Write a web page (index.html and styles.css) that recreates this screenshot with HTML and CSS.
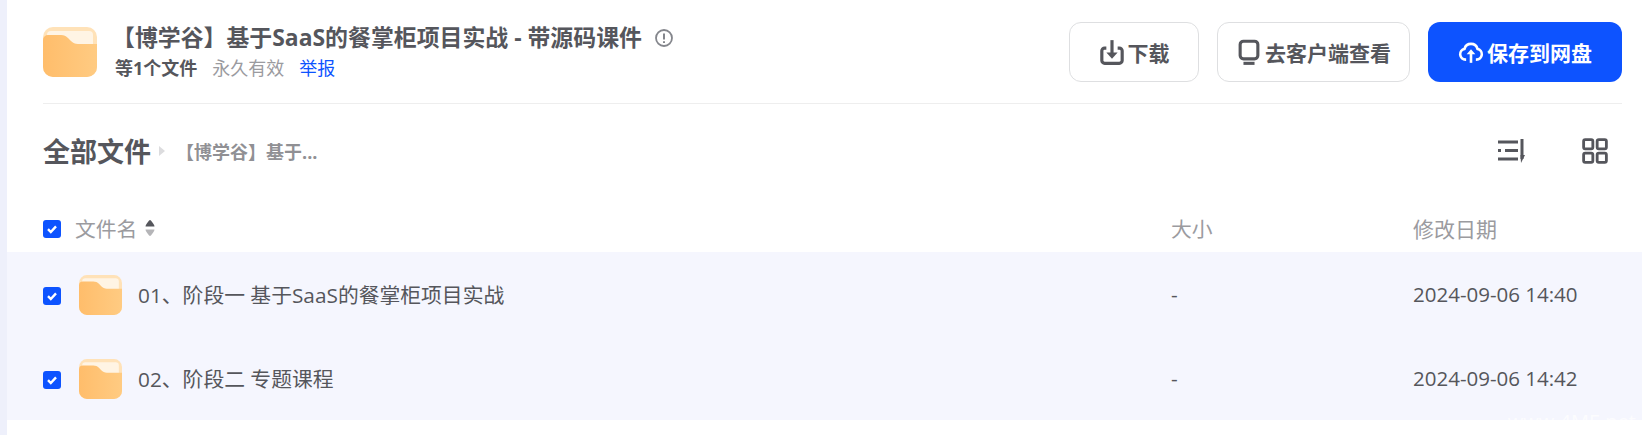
FILE: index.html
```html
<!DOCTYPE html>
<html lang="zh-CN">
<head>
  <meta charset="UTF-8">
  <title>全部文件</title>
  <link rel="stylesheet" href="styles.css">
</head>
<body>
  <svg class="defs" width="0" height="0">
    <defs>
      <linearGradient id="folderFill" x1="0" y1="0" x2="1" y2="0">
        <stop offset="0" stop-color="#ffbd6b"/>
        <stop offset="1" stop-color="#ffcb82"/>
      </linearGradient>
      <symbol id="folder" viewBox="0 0 54 50">
        <rect width="54" height="50" rx="10" fill="#ffe2b8"/>
        <rect x="4" y="4" width="46" height="20" rx="4" fill="#fff4e4"/>
        <path d="M0 13a5 5 0 0 1 5-5h13c3 0 5 1 7 3l3 3c2 2 4 3 7 3h19v23a10 10 0 0 1-10 10H10A10 10 0 0 1 0 40z" fill="url(#folderFill)"/>
      </symbol>
      <symbol id="check" viewBox="0 0 18 18">
        <rect width="18" height="18" rx="3" fill="#0d53ff"/>
        <path d="M5 9.200l2.800 2.800L13 6.400" fill="none" stroke="#fff" stroke-width="2.400"/>
      </symbol>
    </defs>
  </svg>

  <div class="page">
    <header class="share-head">
      <svg class="folder-big"><use href="#folder"/></svg>
      <div class="share-info">
        <h1 class="share-title">【博学谷】基于SaaS的餐掌柜项目实战 - 带源码课件
          <svg class="info-icon" viewBox="0 0 20 20"><circle cx="10" cy="10" r="8" fill="none" stroke="#84868c" stroke-width="1.800"/><path d="M10 5.500v6M10 13.200v1.800" stroke="#84868c" stroke-width="2"/></svg>
        </h1>
        <div class="share-meta">
          <span class="meta-count">等1个文件</span>
          <span class="meta-valid">永久有效</span>
          <a class="meta-report">举报</a>
        </div>
      </div>
      <div class="actions">
        <button class="btn btn-download">
          <svg class="btn-icon" viewBox="1.500 0 21 23"><path d="M7 8H5.500A2.500 2.500 0 0 0 3 10.500V19a2.500 2.500 0 0 0 2.500 2.500h13A2.500 2.500 0 0 0 21 19v-8.500A2.500 2.500 0 0 0 18.500 8H17" fill="none" stroke="#55565c" stroke-width="2.800"/><path d="M12 1v12" stroke="#55565c" stroke-width="2.800"/><path d="M7 12h10l-5 5.500z" fill="#55565c"/></svg>
          下载
        </button>
        <button class="btn btn-client">
          <svg class="btn-icon" viewBox="2 0 20 23.500"><rect x="4" y="2" width="16" height="16" rx="3" fill="none" stroke="#55565c" stroke-width="2.800"/><path d="M7 22h10" stroke="#55565c" stroke-width="2.800"/></svg>
          去客户端查看
        </button>
        <button class="btn btn-save">
          <svg class="btn-icon" viewBox="0 0 24 24"><path d="M7.500 19H7a5 5 0 0 1-1-9.900 6.200 6.200 0 0 1 12 0 5 5 0 0 1-1 9.900h-.5" fill="none" stroke="#fff" stroke-width="2.400"/><path d="M12 22v-9" stroke="#fff" stroke-width="2.400"/><path d="M8 14l4-4.500 4 4.500z" fill="#fff"/></svg>
          保存到网盘
        </button>
      </div>
    </header>

    <div class="crumb-bar">
      <span class="crumb-root">全部文件</span>
      <span class="crumb-arrow"></span>
      <span class="crumb-current">【博学谷】基于...</span>
      <div class="view-tools">
        <svg class="tool-sort" viewBox="0 0 27 24"><path d="M0 3h20M0 11.500h3M7 11.500h13M0 20h20" stroke="#55565c" stroke-width="3"/><path d="M24 0v20" stroke="#55565c" stroke-width="3"/><path d="M22.500 16h4.500L23 24z" fill="#55565c"/></svg>
        <svg class="tool-grid" viewBox="0 0 24 24"><g fill="none" stroke="#55565c" stroke-width="2.600"><rect x="1.500" y="1.500" width="8.500" height="8.500" rx="1.500"/><rect x="14" y="1.500" width="8.500" height="8.500" rx="1.500"/><rect x="1.500" y="14" width="8.500" height="8.500" rx="1.500"/><rect x="14" y="14" width="8.500" height="8.500" rx="1.500"/></g></svg>
      </div>
    </div>

    <div class="file-table">
      <div class="file-row file-row-head">
        <svg class="check"><use href="#check"/></svg>
        <div class="col-name">文件名
          <svg class="sort-arrows" viewBox="0 0 10 16"><path d="M5 0c1 0 4.500 5 4.500 6.500h-9C.5 5 4 0 5 0z" fill="#55565c"/><path d="M5 16C4 16 .5 11 .5 9.500h9C9.500 11 6 16 5 16z" fill="#b5b5b8"/></svg>
        </div>
        <div class="col-size">大小</div>
        <div class="col-date">修改日期</div>
      </div>
      <div class="file-row">
        <svg class="check"><use href="#check"/></svg>
        <div class="col-name">
          <svg class="folder-small"><use href="#folder"/></svg>
          01、阶段一 基于SaaS的餐掌柜项目实战
        </div>
        <div class="col-size">-</div>
        <div class="col-date">2024-09-06 14:40</div>
      </div>
      <div class="file-row">
        <svg class="check"><use href="#check"/></svg>
        <div class="col-name">
          <svg class="folder-small"><use href="#folder"/></svg>
          02、阶段二 专题课程
        </div>
        <div class="col-size">-</div>
        <div class="col-date">2024-09-06 14:42</div>
      </div>
    </div>
  </div>

  <div class="watermark">www.4ME.net</div>
</body>
</html>
```

FILE: styles.css
```css
html, body {
    height: 100%;
}
body {
    margin: 0;
    background-color: #fff;
    font-family: "Open Sans", "Noto Sans CJK SC", sans-serif;
    color: #55565c;
    overflow: hidden;
}
.defs {
    display: block;
    height: 0;
}
.page {
    height: 100%;
    border-left: 7px solid #eef0fb;
    box-sizing: border-box;
}

/* top bar */
.share-head {
    display: flex;
    align-items: center;
    height: 104px;
    margin: 0 20px 0 36px;
    box-sizing: border-box;
    border-bottom: 1px solid #eeeeee;
}
.folder-big {
    width: 54px;
    height: 50px;
    margin-right: 18px;
    flex-shrink: 0;
}
.share-info {
    flex: 1;
}
.share-title {
    margin: 0 0 0 -3px;
    display: flex;
    align-items: center;
    font-size: 22.9px;
    font-weight: 700;
    line-height: 30px;
}
.info-icon {
    width: 20px;
    height: 20px;
    margin-left: 12px;
}
.share-meta {
    display: flex;
    gap: 15px;
    margin-top: 2px;
    font-size: 18px;
    line-height: 26px;
}
.meta-count {
    font-weight: 700;
}
.meta-valid {
    color: #9b9b9f;
}
.meta-report {
    color: #0d53ff;
}
.actions {
    display: flex;
    gap: 18px;
}
.btn {
    display: flex;
    align-items: center;
    justify-content: center;
    gap: 3px;
    height: 60px;
    border: 1px solid #dedfe1;
    border-radius: 12px;
    background-color: #fff;
    color: #55565c;
    font-family: inherit;
    font-size: 21px;
    font-weight: 700;
}
.btn-download {
    width: 130px;
}
.btn-client {
    width: 193px;
}
.btn-save {
    width: 194px;
    border: none;
    background-color: #0d53ff;
    color: #fff;
}
.btn-icon {
    width: 26px;
    height: 26px;
}

/* breadcrumb */
.crumb-bar {
    display: flex;
    align-items: center;
    height: 93px;
    margin: 0 20px 0 36px;
}
.crumb-root {
    font-size: 27px;
    font-weight: 700;
}
.crumb-arrow {
    width: 0;
    height: 0;
    margin: 0 11px 0 8px;
    border-left: 6px solid #dcdcde;
    border-top: 5px solid transparent;
    border-bottom: 5px solid transparent;
}
.crumb-current {
    font-size: 18px;
    font-weight: 700;
    color: #909094;
}
.view-tools {
    display: flex;
    align-items: center;
    gap: 57px;
    margin-left: auto;
    margin-right: 14px;
}
.tool-sort {
    width: 27px;
    height: 24px;
}
.tool-grid {
    width: 26px;
    height: 26px;
}

/* file list */
.file-row {
    display: grid;
    grid-template-columns: 18px 1110px 242px 1fr;
    align-items: center;
    box-sizing: border-box;
    height: 84px;
    padding-left: 36px;
    background-color: #f5f6fe;
    font-size: 20.8px;
}
.file-row-head {
    height: 55px;
    padding-top: 6px;
    background-color: #fff;
    color: #9b9b9f;
}
.check {
    width: 18px;
    height: 18px;
    margin-top: 4px;
}
.file-row-head .check {
    margin-top: 2px;
}
.col-name {
    display: flex;
    align-items: center;
    padding-left: 14px;
}
.col-date {
    font-size: 20.5px;
}
.file-row-head .col-date {
    font-size: 21px;
}
.sort-arrows {
    width: 10px;
    height: 16px;
    margin-left: 8px;
}
.folder-small {
    width: 43px;
    height: 40px;
    margin-top: 2px;
    margin-left: 4px;
    margin-right: 16px;
}
.watermark {
    position: absolute;
    right: 6px;
    bottom: 0;
    font-size: 20px;
    color: rgba(255, 255, 255, 0.75);
}
```
